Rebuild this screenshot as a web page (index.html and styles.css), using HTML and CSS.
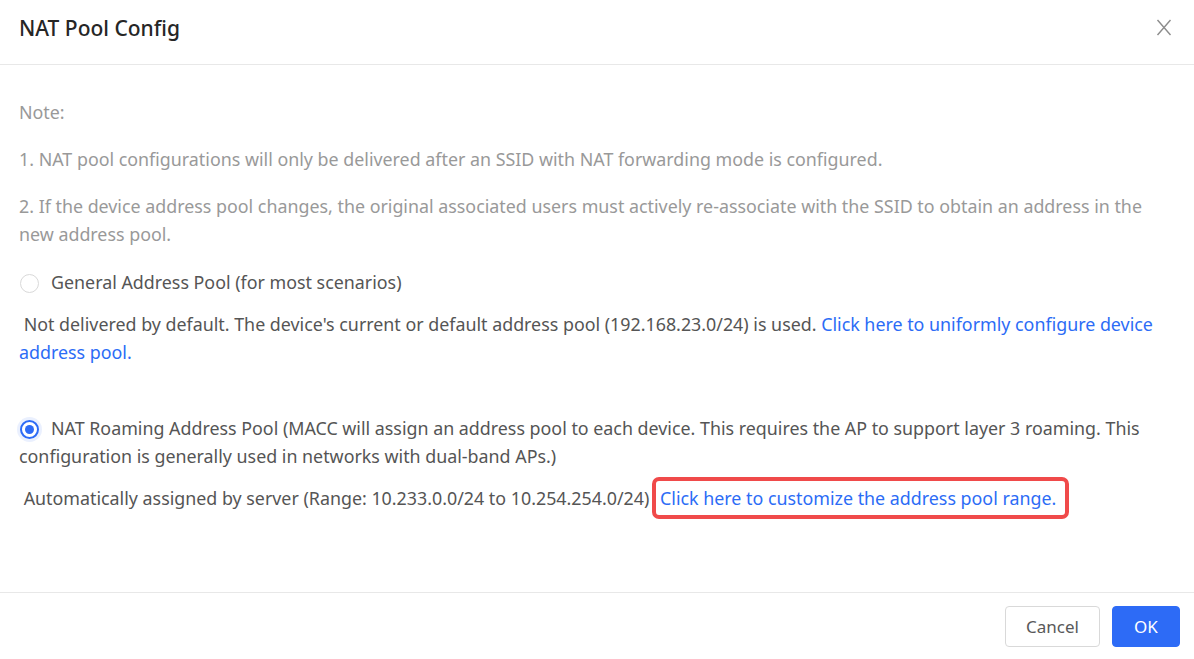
FILE: index.html
```html
<!DOCTYPE html>
<html lang="en">
<head>
<meta charset="utf-8">
<title>NAT Pool Config</title>
<link rel="stylesheet" href="styles.css">
</head>
<body>
<div class="modal">
  <header class="modal-header">
    <h1 class="modal-title">NAT Pool Config</h1>
    <button class="close-btn" aria-label="Close">
      <svg width="16" height="17" viewBox="0 0 16 17"><path d="M1.5 1 L14.5 16 M14.5 1 L1.5 16" stroke="#8c8c8c" stroke-width="1.4" fill="none"/></svg>
    </button>
  </header>
  <main class="modal-body">
    <p class="note">Note:</p>
    <p class="note">1. NAT pool configurations will only be delivered after an SSID with NAT forwarding mode is configured.</p>
    <p class="note">2. If the device address pool changes, the original associated users must actively re-associate with the SSID to obtain an address in the new address pool.</p>

    <label class="radio-row general">
      <span class="radio"></span><span class="radio-text">General Address Pool (for most scenarios)</span>
    </label>
    <p class="desc">&nbsp;Not delivered by default. The device's current or default address pool (192.168.23.0/24) is used. <a class="link" href="#">Click here to uniformly configure device address pool.</a></p>

    <label class="radio-row roaming">
      <span class="radio checked"></span>NAT Roaming Address Pool (MACC will assign an address pool to each device. This requires the AP to support layer 3 roaming. This configuration is generally used in networks with dual-band APs.)
    </label>
    <p class="desc">&nbsp;Automatically assigned by server (Range: 10.233.0.0/24 to 10.254.254.0/24) <a class="link highlight" href="#">Click here to customize the address pool range.</a></p>
  </main>
  <footer class="modal-footer">
    <button class="btn">Cancel</button>
    <button class="btn primary">OK</button>
  </footer>
</div>
</body>
</html>
```
FILE: styles.css
```css
* { box-sizing: border-box; }
html, body { margin: 0; padding: 0; background: #fff; }
body {
  font-family: "Noto Sans", "Open Sans", sans-serif;
  font-size: 17.85px;
  color: #555;
  width: 1194px;
  height: 659px;
  overflow: hidden;
}
.modal { display: flex; flex-direction: column; height: 659px; }
.modal-header {
  height: 65px;
  border-bottom: 1px solid #e8e8e8;
  display: flex;
  align-items: center;
  justify-content: space-between;
  padding: 0 22px 9px 19px;
}
.modal-title {
  margin: 0;
  font-size: 21px;
  font-weight: 500;
  color: #262626;
}
.close-btn {
  border: 0;
  background: none;
  padding: 0;
  width: 16px;
  height: 17px;
  display: flex;
  cursor: pointer;
}
.modal-body {
  flex: 1;
  padding: 33px 19px 0 19px;
  line-height: 28px;
}
.modal-body p { margin: 0; }
.note { color: #999; margin-bottom: 19px !important; }
.radio-row {
  display: block;
  color: #555;
}
.radio-row.general { padding-top: 1px; }
.radio {
  display: inline-block;
  width: 19px;
  height: 19px;
  border: 1px solid #d9d9d9;
  border-radius: 50%;
  vertical-align: -4px;
  margin: 0 12px 0 1px;
  background: #fff;
  position: relative;
}
.radio.checked {
  border: 2px solid #2d6bf6;
  box-shadow: 0 0 0 3px rgba(45, 107, 246, 0.1);
}
.radio.checked::after {
  content: "";
  position: absolute;
  left: 3px; top: 3px;
  width: 9px; height: 9px;
  border-radius: 50%;
  background: #2d6bf6;
}
.desc { margin-top: 14px !important; }
.radio-row.roaming { margin-top: 48px; }
.link { color: #2c6cf6; text-decoration: none; }
.link.highlight {
  border: 4px solid #f04a4a;
  border-radius: 7px;
  padding: 5px 9px 5px 4px;
  margin-left: -2px;
}
.modal-footer {
  border-top: 1px solid #e8e8e8;
  display: flex;
  justify-content: flex-end;
  gap: 12px;
  padding: 13px 14px 12px 0;
}
.btn {
  height: 41px;
  padding: 0 20px;
  border: 1px solid #d9d9d9;
  border-radius: 4px;
  background: #fff;
  color: #595959;
  font-family: inherit;
  font-size: 17px;
  cursor: pointer;
}
.btn.primary {
  background: #2d6bf6;
  border-color: #2d6bf6;
  color: #fff;
  width: 68px;
  padding: 0;
}
```
